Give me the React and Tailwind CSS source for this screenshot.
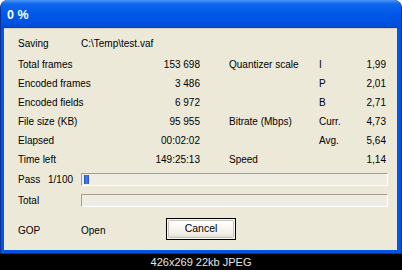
import React from 'react';

const font = { fontFamily: '"Liberation Sans", Arial, sans-serif' };

// ── Stat row: left label/value pair + right label/letter/value ──────────────────
function Row({ label, value, rLabel, rKey, rValue, className = '' }) {
  return (
    <div className={`flex items-center h-[19px] ${className}`}>
      <div className="w-[182px] flex justify-between">
        <span>{label}</span>
        <span>{value}</span>
      </div>
      <div className="w-[29px]" />
      <div className="w-[90px]">{rLabel}</div>
      <div className="w-[67px] flex justify-between">
        <span>{rKey}</span>
        <span>{rValue}</span>
      </div>
    </div>
  );
}

function Bar({ label, sub, fill }) {
  return (
    <div className="flex items-center h-[13px]">
      <span className="w-[30px]">{label}</span>
      <span className="w-[33px]">{sub}</span>
      <div className="w-[307px] h-[13px] border border-[#a3a092] border-b-white border-r-white bg-[#efede3] flex items-center pl-[2px]">
        {fill && <div className="w-[5px] h-[9px] bg-[linear-gradient(to_right,#2050c8,#4a7ff0,#2050c8)]" />}
      </div>
    </div>
  );
}

export default function App() {
  return (
    <div className="w-[402px] h-[270px] bg-white flex flex-col text-[10px] text-black" style={font}>
      {/* Window */}
      <div className="h-[254px] flex flex-col rounded-t-[8px] bg-[#0055e5] border-l border-r border-b border-[#0a2f9a] overflow-hidden">
        {/* Title bar */}
        <div className="h-[28px] shrink-0 flex items-center pl-[6px] bg-[linear-gradient(to_bottom,#4a98f8_0%,#0f66ee_14%,#0058e8_50%,#0052e0_85%,#0044c8_100%)]">
          <span className="text-white font-bold text-[12.5px] mt-[2px]">0 %</span>
        </div>
        {/* Body */}
        <div className="flex-1 mx-[3px] mb-[3px] mr-[4px] bg-[#ece9d8] border-t border-[#d6d2c0] pl-[14px] pt-[5px]">
          <div className="flex items-center h-[19px] mb-[2px]">
            <span className="w-[63px]">Saving</span>
            <span>C:\Temp\test.vaf</span>
          </div>
          <Row label="Total frames" value="153 698" rLabel="Quantizer scale" rKey="I" rValue="1,99" />
          <Row label="Encoded frames" value="3 486" rKey="P" rValue="2,01" />
          <Row label="Encoded fields" value="6 972" rKey="B" rValue="2,71" />
          <Row label="File size (KB)" value="95 955" rLabel="Bitrate (Mbps)" rKey="Curr." rValue="4,73" />
          <Row label="Elapsed" value="00:02:02" rKey="Avg." rValue="5,64" />
          <Row label="Time left" value="149:25:13" rLabel="Speed" rValue="1,14" />
          <div className="mt-[4px]">
            <Bar label="Pass" sub="1/100" fill />
          </div>
          <div className="mt-[8px]">
            <Bar label="Total" />
          </div>
          <div className="flex items-center mt-[11px]">
            <span className="w-[63px] mt-[2px]">GOP</span>
            <span className="w-[85px] mt-[2px]">Open</span>
            <button className="w-[70px] h-[22px] border border-black bg-[#f4f3ee] p-[1px]">
              <div className="w-full h-full rounded-[2px] border border-[#c9c6b8] bg-[linear-gradient(to_bottom,#ffffff,#f1efe6_80%,#e3e0d2)] flex items-center justify-center text-[10.5px]">
                Cancel
              </div>
            </button>
          </div>
        </div>
      </div>
      {/* Caption */}
      <div className="flex-1 bg-black text-[#e6e6e6] text-[11px] flex items-center justify-center">
        426x269 22kb JPEG
      </div>
    </div>
  );
}
